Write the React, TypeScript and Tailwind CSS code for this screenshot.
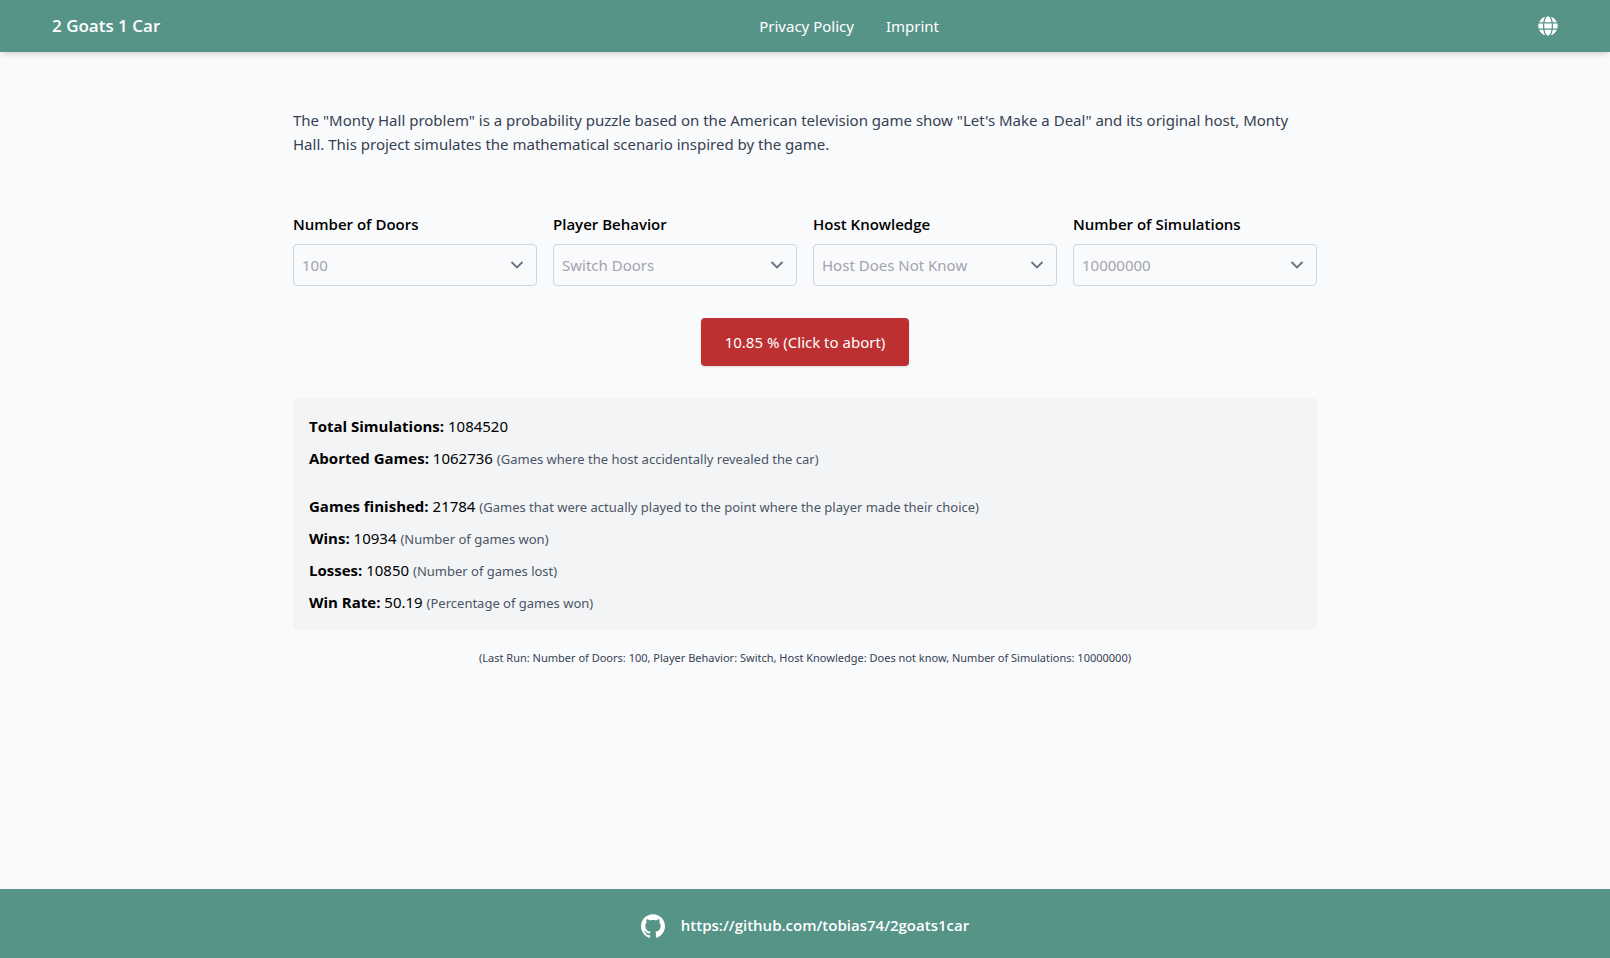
import { useId } from 'react'
import { FaGlobe } from 'react-icons/fa'
import { SiGithub } from 'react-icons/si'

const settings = [
  { label: 'Number of Doors', value: '100' },
  { label: 'Player Behavior', value: 'Switch Doors' },
  { label: 'Host Knowledge', value: 'Host Does Not Know' },
  { label: 'Number of Simulations', value: '10000000' },
]

const simulationStats = [
  { label: 'Total Simulations:', value: '1084520', note: '' },
  { label: 'Aborted Games:', value: '1062736', note: '(Games where the host accidentally revealed the car)' },
]

const gameStats = [
  {
    label: 'Games finished:',
    value: '21784',
    note: '(Games that were actually played to the point where the player made their choice)',
  },
  { label: 'Wins:', value: '10934', note: '(Number of games won)' },
  { label: 'Losses:', value: '10850', note: '(Number of games lost)' },
  { label: 'Win Rate:', value: '50.19', note: '(Percentage of games won)' },
]

type Stat = { label: string; value: string; note: string }

function Setting({ label, value }: { label: string; value: string }) {
  const id = useId()
  return (
    <div className="flex flex-col gap-2">
      <label htmlFor={id} className="font-['Open_Sans',sans-serif] leading-6 font-semibold text-black">
        {label}
      </label>
      <div className="grid items-center">
        <select
          id={id}
          disabled
          defaultValue={value}
          className="col-start-1 row-start-1 h-[42px] w-full appearance-none rounded border border-gray-300 bg-transparent px-2 text-[#a3a3b0] opacity-100"
        >
          <option>{value}</option>
        </select>
        <svg
          viewBox="0 0 20 20"
          className="pointer-events-none col-start-1 row-start-1 mr-2.5 size-5 justify-self-end text-gray-500"
          fill="none"
          stroke="currentColor"
          strokeWidth="1.8"
          aria-hidden="true"
        >
          <path d="M4.5 7l5.5 5.5L15.5 7" />
        </svg>
      </div>
    </div>
  )
}

function StatRow({ label, value, note }: Stat) {
  return (
    <p className="leading-6">
      <strong className="font-['Open_Sans',sans-serif] font-bold">{label}</strong> {value}{' '}
      {note && <span className="text-[13px] leading-none text-gray-600">{note}</span>}
    </p>
  )
}

export default function App() {
  return (
    <div className="flex min-h-screen flex-col bg-gray-50 font-['Noto_Sans',sans-serif] text-[15px] text-black">
      <header className="flex h-[52px] items-center justify-between bg-[#569488] px-[52px] text-white shadow-md">
        <a href="#" className="font-['Open_Sans',sans-serif] text-[17px] font-semibold">
          2 Goats 1 Car
        </a>
        <nav className="flex gap-8">
          <a href="#privacy">Privacy Policy</a>
          <a href="#imprint">Imprint</a>
        </nav>
        <button type="button" aria-label="Change language">
          <FaGlobe className="size-5" />
        </button>
      </header>

      <main className="mx-auto w-full max-w-5xl flex-1 pt-14">
        <p className="leading-6 text-gray-700">
          The "Monty Hall problem" is a probability puzzle based on the American television game show "Let's Make a
          Deal" and its original host, Monty Hall. This project simulates the mathematical scenario inspired by the
          game.
        </p>

        <div className="mt-14 grid grid-cols-4 gap-4">
          {settings.map((s) => (
            <Setting key={s.label} label={s.label} value={s.value} />
          ))}
        </div>

        <div className="mt-8 flex justify-center">
          <button type="button" className="h-12 rounded bg-[#bc3032] px-6 text-white shadow-sm">
            10.85 % (Click to abort)
          </button>
        </div>

        <section className="mt-8 flex flex-col gap-6 rounded bg-gray-100 p-4">
          <div className="flex flex-col gap-2">
            {simulationStats.map((s) => (
              <StatRow key={s.label} {...s} />
            ))}
          </div>
          <div className="flex flex-col gap-2">
            {gameStats.map((s) => (
              <StatRow key={s.label} {...s} />
            ))}
          </div>
        </section>

        <p className="mt-5 text-center text-[11px] leading-4 text-gray-700">
          (Last Run: Number of Doors: 100, Player Behavior: Switch, Host Knowledge: Does not know, Number of
          Simulations: 10000000)
        </p>
      </main>

      <footer className="flex h-[69px] items-center justify-center gap-4 bg-[#569488] pt-1 text-white">
        <SiGithub className="size-6" />
        <a
          href="https://github.com/tobias74/2goats1car"
          className="font-['Open_Sans',sans-serif] font-semibold"
        >
          https://github.com/tobias74/2goats1car
        </a>
      </footer>
    </div>
  )
}
